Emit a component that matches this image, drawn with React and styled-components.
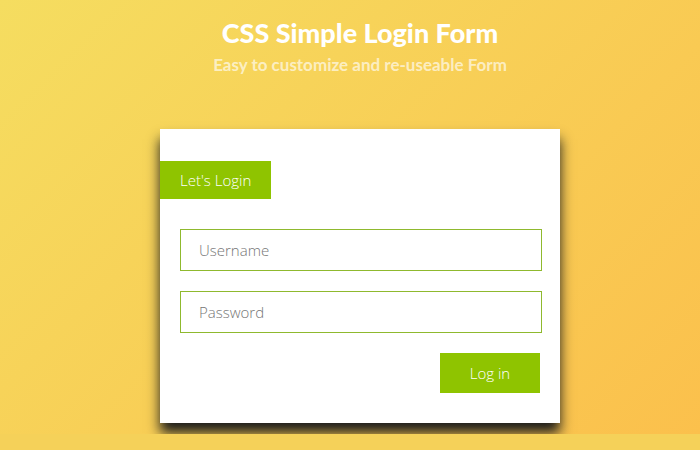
import React from 'react';
import styled, { createGlobalStyle } from 'styled-components';

const GlobalStyle = createGlobalStyle`
  * { box-sizing: border-box; }
  body { margin: 0; background: #f5d159; font-family: "Open Sans", sans-serif; }
`;

const Page = styled.main`
  padding: 16px 20px 11px 40px;
  background: linear-gradient(135deg, #f5dd60 0%, #fbc04c 100%);
  overflow: hidden;
`;

const Header = styled.header`
  text-align: center;
  font-family: Lato, sans-serif;
`;

const Title = styled.h1`
  margin: 0;
  font-size: 27px;
  font-weight: 900;
  line-height: 34px;
  color: #fff;
`;

const Subtitle = styled.p`
  margin: 4px 0 0;
  font-size: 17px;
  font-weight: 700;
  line-height: 22px;
  color: rgba(255, 255, 255, 0.65);
`;

const Card = styled.form`
  max-width: 400px;
  margin: 53px auto 0;
  padding: 32px 0 30px;
  display: flex;
  flex-direction: column;
  align-items: flex-start;
  gap: 20px;
  background: #fff;
  box-shadow: 0 10px 12px #1c1c1c;
`;

const Heading = styled.h2`
  margin: 0 0 10px;
  padding: 0 20px;
  font-size: 15px;
  font-weight: 300;
  line-height: 38px;
  color: #fff;
  background: #8fc400;
`;

const Field = styled.input`
  width: calc(100% - 38px);
  height: 42px;
  margin: 0 18px 0 20px;
  padding: 0 18px;
  border: 1px solid #8fb92e;
  border-radius: 0;
  background: #fff;
  font: 300 15px "Open Sans", sans-serif;
  color: #555;
  &::placeholder { color: #757575; opacity: 1; }
`;

const Submit = styled.button`
  align-self: flex-end;
  width: 100px;
  height: 40px;
  margin-right: 20px;
  padding: 0;
  border: 0;
  background: #8fc400;
  color: #fff;
  font: 300 15px "Open Sans", sans-serif;
`;

export default function App() {
  return (
    <>
      <GlobalStyle />
      <Page>
        <Header>
          <Title>CSS Simple Login Form</Title>
          <Subtitle>Easy to customize and re-useable Form</Subtitle>
        </Header>
        <Card onSubmit={(event) => event.preventDefault()}>
          <Heading>Let's Login</Heading>
          <Field type="text" placeholder="Username" aria-label="Username" />
          <Field type="password" placeholder="Password" aria-label="Password" />
          <Submit type="submit">Log in</Submit>
        </Card>
      </Page>
    </>
  );
}
